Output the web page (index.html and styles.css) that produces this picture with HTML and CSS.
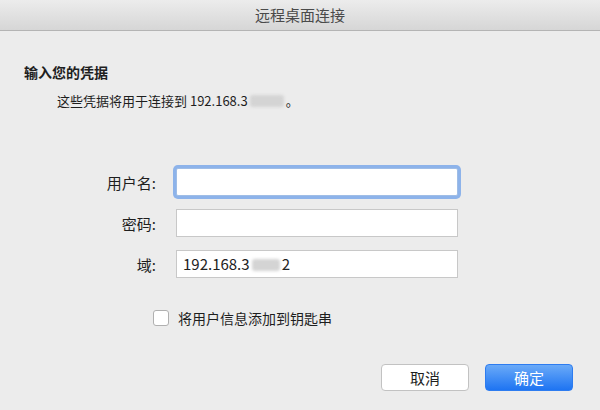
FILE: index.html
```html
<!DOCTYPE html>
<html lang="zh-CN">
<head>
  <meta charset="UTF-8" />
  <meta name="viewport" content="width=device-width, initial-scale=1.0"/>
  <title>远程桌面连接</title>
  <link rel="stylesheet" href="styles.css">
</head>
<body>

<div class="window">
  <div class="titlebar">远程桌面连接</div>

  <div class="content">
    <h2>输入您的凭据</h2>
    <p class="hint">这些凭据将用于连接到 192.168.3<span class="blur"></span>。</p>

    <form class="fields">
      <label for="user">用户名:</label>
      <input type="text" id="user" class="focused" />

      <label for="pass">密码:</label>
      <input type="password" id="pass" />

      <label for="domain">域:</label>
      <div class="fake-input">192.168.3<span class="blur small"></span>2</div>
    </form>

    <div class="keychain">
      <span class="checkbox"></span>
      <span>将用户信息添加到钥匙串</span>
    </div>

    <div class="buttons">
      <button type="button" class="btn">取消</button>
      <button type="button" class="btn primary">确定</button>
    </div>
  </div>
</div>

</body>
</html>
```

FILE: styles.css
```css
body {
  margin: 0;
  background: #ececec;
  font-family: "Noto Sans CJK SC", "Noto Sans", sans-serif;
  color: #1e1e1e;
}
.window {
  width: 600px;
  height: 410px;
  overflow: hidden;
}
.titlebar {
  height: 30px;
  line-height: 30px;
  text-align: center;
  font-size: 15px;
  color: #4a4a4a;
  background: linear-gradient(#ececec, #d6d6d6);
  border-bottom: 1px solid #b4b4b4;
}
.content {
  padding: 30px 0 0 24px;
}
h2 {
  margin: 0;
  font-size: 14px;
  line-height: 22px;
  font-weight: bold;
}
.hint {
  margin: 9px 0 0 33px;
  font-size: 13px;
  line-height: 18px;
}
.blur {
  display: inline-block;
  width: 34px;
  height: 12px;
  margin: 0 2px;
  vertical-align: -1px;
  background: #d4d4d4;
  border-radius: 3px;
  filter: blur(1.5px);
}
.blur.small {
  width: 28px;
}
.fields {
  display: grid;
  grid-template-columns: 132px 282px;
  column-gap: 20px;
  row-gap: 13px;
  align-items: center;
  margin-top: 58px;
}
.fields label {
  text-align: right;
  font-size: 15px;
}
.fields input, .fake-input {
  box-sizing: border-box;
  height: 28px;
  margin: 0;
  padding: 0 6px;
  border: 1px solid #c8c8c8;
  background: white;
  font-size: 15px;
  font-family: inherit;
  outline: none;
}
.fake-input {
  line-height: 26px;
  color: #222;
}
.fields input.focused {
  border-color: #9fbde6;
  box-shadow: 0 0 0 3px #8db3ea;
  border-radius: 2px;
}
.keychain {
  display: flex;
  align-items: center;
  gap: 9px;
  margin: 30px 0 0 129px;
  font-size: 14px;
}
.checkbox {
  width: 14px;
  height: 14px;
  border: 1px solid #b0b0b0;
  border-radius: 3px;
  background: white;
}
.buttons {
  display: flex;
  gap: 16px;
  justify-content: flex-end;
  margin: 36px 27px 0 0;
}
.btn {
  width: 88px;
  height: 27px;
  font-size: 15px;
  font-family: inherit;
  border: 1px solid #c2c2c2;
  border-radius: 4px;
  background: white;
  color: #1e1e1e;
  cursor: pointer;
}
.btn.primary {
  color: white;
  border-color: #2d7cf0;
  background: linear-gradient(#6aaaf8, #1e74f2);
}
```
